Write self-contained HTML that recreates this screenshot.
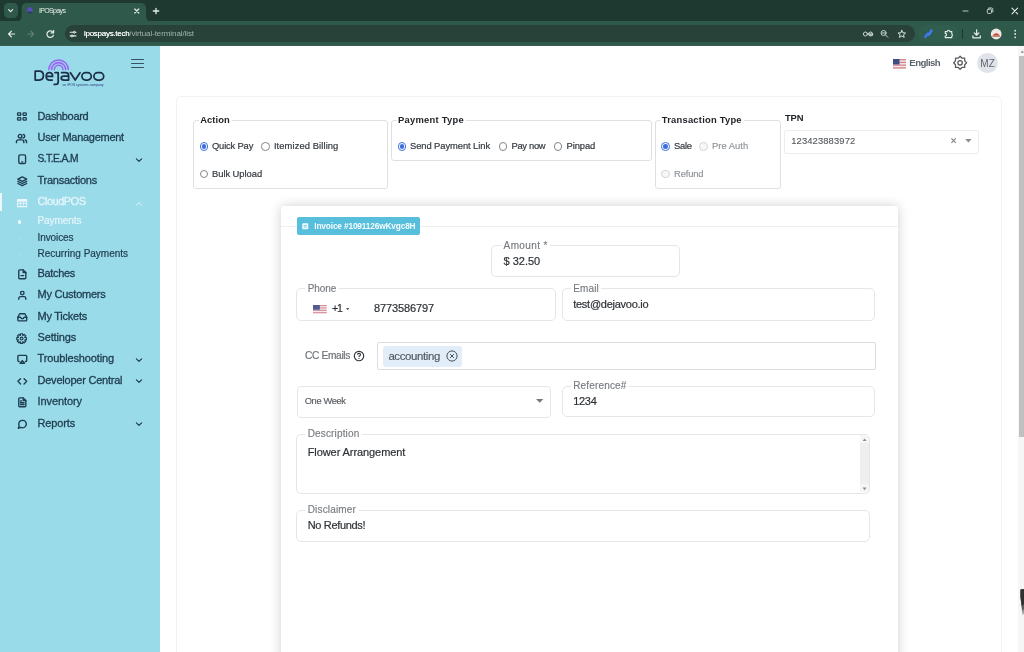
<!DOCTYPE html>
<html lang="en">
<head>
<meta charset="utf-8">
<title>IPOSpays</title>
<style>
*{box-sizing:border-box;margin:0;padding:0}
html,body{width:1024px;height:652px;overflow:hidden;background:#fff}
body{font-family:"Liberation Sans",sans-serif;position:relative;color:#333}
svg{position:absolute;overflow:visible}
.t{position:absolute;white-space:nowrap;line-height:1}
.b{position:absolute}
#root{position:absolute;left:0;top:0;width:1024px;height:652px;overflow:hidden;will-change:transform}

/* ---------- browser chrome ---------- */
#tabstrip{position:absolute;left:0;top:0;width:1024px;height:21px;background:#1e392f}
#toolbar{position:absolute;left:0;top:21px;width:1024px;height:25px;background:#2f5a4b;border-bottom:1px solid #3a5c52}
#tab{display:none}
#tabsearch{position:absolute;left:3.5px;top:3.2px;width:14.8px;height:15px;border-radius:4.5px;background:#2f5a4b}
#omni{position:absolute;left:65px;top:24.8px;width:850px;height:17.7px;border-radius:9px;background:#28423a}
#extpill{position:absolute;left:918px;top:25px;width:40px;height:17px;border-radius:9px;background:#315d4e}

/* ---------- sidebar ---------- */
#side{position:absolute;left:0;top:46px;width:160px;height:606px;background:#9adbea}
.ico{stroke:#1e3c4e;fill:none;stroke-width:1.15;stroke-linecap:round;stroke-linejoin:round}

/* ---------- main ---------- */
#card{position:absolute;left:176px;top:96px;width:826px;height:600px;border:1px solid #f2f2f2;border-radius:5px;background:#fff}
.fs{position:absolute;border:1px solid #e0e0e0;border-radius:3px}
.lgbg{position:absolute;background:#fff;height:4px}
.rd{position:absolute;width:8.6px;height:8.6px;border:1px solid #858585;border-radius:50%;background:#fff}
.rd.on{border-color:#3b6fe0}
.rd.on:after{content:"";position:absolute;left:1px;top:1px;width:4.6px;height:4.6px;border-radius:50%;background:#3b6fe0}
.rd.dis{border-color:#d4d4d4;background:#f7f7f7}
#inv{position:absolute;left:281px;top:206px;width:617px;height:500px;background:#fff;box-shadow:0 0 12px rgba(0,0,0,.19);border-radius:3px}
.fld{position:absolute;border:1px solid #e6e6e6;border-radius:5px;background:#fff}
</style>
</head>
<body>
<div id="root">
<div id="tabstrip"></div><div id="toolbar"></div><div id="tabsearch"></div><div id="tab"></div><div id="omni"></div><div id="extpill"></div>
<svg id="chromeicons" width="1024" height="46" viewBox="0 0 1024 46" style="left:0;top:0" fill="none" stroke="#e4ece8" stroke-width="1.1" stroke-linecap="round" stroke-linejoin="round">
  <!-- tab search chevron -->
  <path d="M8.6 9.6 L10.6 11.6 L12.6 9.6" stroke-width="1.2"/>
  <!-- tab shape -->
  <path d="M15.5 21.6 Q21.6 21.6 21.6 16 V8.5 Q21.6 3 27 3 H140.6 Q146 3 146 8.5 V16 Q146 21.6 152 21.6 Z" fill="#2f5a4b" stroke="none"/>
  <!-- favicon -->
  <path d="M27.2 10.2 A2.5 2.6 0 0 1 32.2 10.2 L32.2 11 L27.2 11 Z" fill="#5a4cb8" stroke="#5a4cb8" stroke-width="1"/>
  <path d="M28.2 12.6 H31.4" stroke="#2b3f66" stroke-width="1.6"/>
  <!-- tab close -->
  <path d="M134.8 9 L138.8 13 M138.8 9 L134.8 13" stroke-width="1.2"/>
  <!-- new tab -->
  <path d="M156 8.3 V13.7 M153.3 11 H158.7" stroke-width="1.3"/>
  <!-- back -->
  <path d="M14.6 34 H8.8 M11.4 31.2 L8.6 34 L11.4 36.8" stroke-width="1.2"/>
  <!-- forward (dim) -->
  <path d="M27.6 34 H33.4 M30.8 31.2 L33.6 34 L30.8 36.8" stroke="#5f8175" stroke-width="1.2"/>
  <!-- reload -->
  <path d="M53.2 32.6 A3.3 3.3 0 1 0 53.4 35.2" stroke-width="1.2"/>
  <path d="M53.6 30.4 V32.9 H51.1" stroke-width="1.2"/>
  <!-- site info (tune) -->
  <path d="M70.2 32.3 H73.2 M75.4 32.3 H76 M70.2 35.9 H71 M73.2 35.9 H76" stroke-width="1.1"/>
  <circle cx="74.3" cy="32.3" r="1" stroke-width="1"/>
  <circle cx="72" cy="35.9" r="1" stroke-width="1"/>
  <!-- key -->
  <circle cx="865.4" cy="34" r="2" stroke="#c9d6d0" stroke-width="1"/>
  <path d="M867.4 34 H872.2 M870.2 34 V35.6 M872.2 34 V35.6" stroke="#c9d6d0" stroke-width="1"/>
  <circle cx="870.6" cy="34" r="2" stroke="#c9d6d0" stroke-width="1"/>
  <!-- zoom -->
  <circle cx="883.6" cy="33" r="2.5" stroke="#c9d6d0" stroke-width="1"/>
  <path d="M885.5 35 L887.8 37.3 M882.4 33 H884.8" stroke="#c9d6d0" stroke-width="1"/>
  <!-- star -->
  <path d="M901.8 30.3 L902.9 32.8 L905.6 33 L903.5 34.8 L904.2 37.4 L901.8 36 L899.4 37.4 L900.1 34.8 L898 33 L900.7 32.8 Z" stroke="#d5e0db" stroke-width="1"/>
  <!-- blue extension -->
  <path d="M925.4 36.8 L927.8 33.8 L929 34.6 L931.4 30.6" stroke="#3e78f2" stroke-width="2.6"/>
  <!-- puzzle -->
  <path d="M945.2 31.6 H947.2 A1.3 1.3 0 0 1 949.8 31.6 H951.8 V34 A1.3 1.3 0 0 1 951.8 36.2 V37.6 H945.2 V36 A1.3 1.3 0 0 0 945.2 33.4 Z" stroke-width="1.1"/>
  <!-- separator -->
  <path d="M962.5 29.5 V38.5" stroke="#1d382e" stroke-width="1"/>
  <!-- download -->
  <path d="M976.6 29.8 V35 M974.3 32.9 L976.6 35.2 L978.9 32.9 M972.9 35.8 V37.8 H980.3 V35.8" stroke-width="1.25"/>
  <!-- profile avatar -->
  <circle cx="996.2" cy="34" r="5.4" fill="#eee9e4" stroke="none"/>
  <path d="M992.6 35.6 Q996.2 31 999.8 35.6 Z" fill="#c8442f" stroke="none"/>
  <path d="M992.8 36.2 H999.6" stroke="#8d3a2b" stroke-width=".8"/>
  <!-- kebab -->
  <circle cx="1015.2" cy="30.7" r=".9" fill="#e4ece8" stroke="none"/>
  <circle cx="1015.2" cy="34" r=".9" fill="#e4ece8" stroke="none"/>
  <circle cx="1015.2" cy="37.3" r=".9" fill="#e4ece8" stroke="none"/>
  <!-- window controls -->
  <path d="M963 11 H968" stroke="#b9c7c1" stroke-width="1"/>
  <rect x="987.3" y="9.2" width="4.2" height="4.2" rx="1" stroke="#c9d5d0" stroke-width="1"/>
  <path d="M988.8 8 H991.6 Q992.8 8 992.8 9.2 V12" stroke="#c9d5d0" stroke-width="1"/>
  <path d="M1012 8.2 L1017.6 13.8 M1017.6 8.2 L1012 13.8" stroke="#e4ece8" stroke-width="1.1"/>
</svg>
<div class="t" style="left:39.00px;top:7.00px;font-size:7.00px;color:#e6eeea;letter-spacing:-0.652px;line-height:7px;">IPOSpays</div>
<div class="t" style="left:84.00px;top:29.00px;font-size:8.00px;color:#f4f8f6;letter-spacing:-0.278px;line-height:9px;text-shadow:0 0 .4px #f4f8f6;">ipospays.tech</div>
<div class="t" style="left:129.30px;top:29.00px;font-size:8.00px;color:#9fb3aa;letter-spacing:-0.090px;line-height:9px;">/virtual-terminal/list</div>

<div id="side"></div>
<div class="b" style="left:0;top:193px;width:2px;height:18px;background:#e9f7fb"></div>
<svg viewBox="0 0 160 60" style="left:0;top:46px;width:160px;height:60px" fill="none" stroke-linecap="round" stroke-linejoin="round">
 <g stroke="#9b66f1" stroke-width="1.55">
  <path d="M48.9 23.6 A9.7 9.7 0 0 1 68.3 23.6"/>
  <path d="M51.6 23.6 A7 7 0 0 1 65.6 23.6"/>
  <path d="M54.3 23.6 A4.3 4.3 0 0 1 62.9 23.6"/>
 </g>
 <g stroke="#1b3046" stroke-width="1.75">
  <!-- D -->
  <path d="M35.2 25.1 V34 H39.2 Q43.4 34 43.4 29.55 Q43.4 25.1 39.2 25.1 Z"/>
  <!-- e -->
  <path d="M46.2 30.4 H52.6 Q52.6 26.7 49.4 26.7 Q46.2 26.7 46.2 30.4 Q46.2 34 49.6 34 H52.2"/>
  <!-- j -->
  <path d="M55 26.7 H58.2 V36 Q58.2 38.4 55.8 38.4 H54.2"/>
  <!-- a -->
  <path d="M61.6 26.7 H65.6 Q68.6 26.7 68.6 29.6 V34 H64 Q61.2 34 61.2 32 Q61.2 30 64 30 H68.4"/>
  <!-- v -->
  <path d="M70.4 26.7 L75.2 34 L80 26.7"/>
  <!-- o -->
  <rect x="81.9" y="26.7" width="9.4" height="7.3" rx="3.65"/>
  <rect x="93.9" y="26.7" width="9.8" height="7.3" rx="3.65"/>
 </g>
 <text x="62.4" y="39.8" font-family="Liberation Sans, sans-serif" font-size="2.6" fill="#2a3a78" stroke="none" textLength="41.2" lengthAdjust="spacingAndGlyphs">an iPOS systems company</text>
</svg>
<div class="b" style="left:131px;top:58.7px;width:12.8px;height:1.8px;border-radius:1px;background:#38535f"></div>
<div class="b" style="left:131px;top:62.6px;width:12.8px;height:1.8px;border-radius:1px;background:#38535f"></div>
<div class="b" style="left:131px;top:66.6px;width:12.8px;height:1.8px;border-radius:1px;background:#38535f"></div>
<div class="t" style="left:37.50px;top:110.00px;font-size:11.00px;color:#1e3c4e;letter-spacing:-0.335px;line-height:12px;-webkit-text-stroke:.3px;">Dashboard</div>
<div class="t" style="left:37.50px;top:131.00px;font-size:11.00px;color:#1e3c4e;letter-spacing:-0.272px;line-height:12px;-webkit-text-stroke:.3px;">User Management</div>
<div class="t" style="left:37.50px;top:153.00px;font-size:10.30px;color:#1e3c4e;letter-spacing:-0.576px;line-height:11px;-webkit-text-stroke:.3px;">S.T.E.A.M</div>
<div class="t" style="left:37.50px;top:174.00px;font-size:11.00px;color:#1e3c4e;letter-spacing:-0.264px;line-height:12px;-webkit-text-stroke:.3px;">Transactions</div>
<div class="t" style="left:37.50px;top:195.00px;font-size:11.00px;color:#e4f5fa;letter-spacing:-0.496px;line-height:12px;-webkit-text-stroke:.3px;">CloudPOS</div>
<div class="t" style="left:37.50px;top:267.00px;font-size:11.00px;color:#1e3c4e;letter-spacing:-0.321px;line-height:12px;-webkit-text-stroke:.3px;">Batches</div>
<div class="t" style="left:37.50px;top:288.00px;font-size:11.00px;color:#1e3c4e;letter-spacing:-0.242px;line-height:12px;-webkit-text-stroke:.3px;">My Customers</div>
<div class="t" style="left:37.50px;top:310.00px;font-size:11.00px;color:#1e3c4e;letter-spacing:-0.245px;line-height:12px;-webkit-text-stroke:.3px;">My Tickets</div>
<div class="t" style="left:37.50px;top:331.00px;font-size:11.00px;color:#1e3c4e;letter-spacing:-0.143px;line-height:12px;-webkit-text-stroke:.3px;">Settings</div>
<div class="t" style="left:37.50px;top:352.00px;font-size:11.00px;color:#1e3c4e;letter-spacing:-0.132px;line-height:12px;-webkit-text-stroke:.3px;">Troubleshooting</div>
<div class="t" style="left:37.50px;top:374.00px;font-size:11.00px;color:#1e3c4e;letter-spacing:-0.227px;line-height:12px;-webkit-text-stroke:.3px;">Developer Central</div>
<div class="t" style="left:37.50px;top:395.00px;font-size:11.00px;color:#1e3c4e;letter-spacing:-0.083px;line-height:12px;-webkit-text-stroke:.3px;">Inventory</div>
<div class="t" style="left:37.50px;top:417.00px;font-size:11.00px;color:#1e3c4e;letter-spacing:-0.145px;line-height:12px;-webkit-text-stroke:.3px;">Reports</div>
<div class="t" style="left:37.50px;top:215.00px;font-size:10.00px;color:#e4f5fa;letter-spacing:-0.083px;line-height:11px;-webkit-text-stroke:.2px;">Payments</div>
<div class="t" style="left:37.50px;top:232.00px;font-size:10.00px;color:#1e3c4e;letter-spacing:-0.098px;line-height:11px;-webkit-text-stroke:.2px;">Invoices</div>
<div class="t" style="left:37.50px;top:248.00px;font-size:10.00px;color:#1e3c4e;letter-spacing:0.000px;line-height:11px;-webkit-text-stroke:.2px;">Recurring Payments</div>
<div class="b" style="left:18px;top:220.4px;width:3.2px;height:3.2px;border-radius:50%;background:#eef9fc"></div>
<div class="b" style="left:18.2px;top:237.2px;width:2.8px;height:2.8px;border-radius:50%;background:#a6dcea"></div>
<div class="b" style="left:18.2px;top:253.6px;width:2.8px;height:2.8px;border-radius:50%;background:#a6dcea"></div>
<svg class="ico" viewBox="0 0 1024 652" style="left:0;top:0;width:1024px;height:652px;stroke-width:1.3"><rect x="17.55" y="112.85" width="3.2" height="2.6" rx=".7"/><rect x="23.05" y="112.85" width="3.2" height="2.6" rx=".7"/><rect x="17.55" y="117.55" width="3.2" height="2.6" rx=".7"/><rect x="23.05" y="117.55" width="3.2" height="2.6" rx=".7"/></svg>
<svg class="ico" viewBox="0 0 24 24" style="left:16.40px;top:132.80px;width:11.00px;height:11.00px;stroke:#1e3c4e;stroke-width:3.10"><path d="M17 21v-2a4 4 0 0 0-4-4H5a4 4 0 0 0-4 4v2"/><circle cx="9" cy="7" r="4"/><path d="M23 21v-2a4 4 0 0 0-3-3.87"/><path d="M16 3.13a4 4 0 0 1 0 7.75"/></svg>
<svg class="ico" viewBox="0 0 24 24" style="left:16.60px;top:154.20px;width:10.40px;height:10.40px;stroke:#1e3c4e;stroke-width:3.10"><rect x="4.2" y="2" width="15.6" height="20" rx="3"/><path d="M11 18.2h2"/></svg>
<svg class="ico" viewBox="0 0 24 24" style="left:16.60px;top:175.50px;width:10.60px;height:10.60px;stroke:#1e3c4e;stroke-width:3.10"><path d="M12 2 2 7l10 5 10-5-10-5z"/><path d="M2 17l10 5 10-5"/><path d="M2 12l10 5 10-5"/></svg>
<svg viewBox="0 0 24 24" style="left:15.6px;top:196.5px;width:12.2px;height:12.2px"><path fill="#e9f7fb" d="M3 4h18a1 1 0 0 1 1 1v14a1 1 0 0 1-1 1H3a1 1 0 0 1-1-1V5a1 1 0 0 1 1-1zm1 5.5v3h4.5v-3zm6 0v3h4.5v-3zm6 0v3H20v-3zM4 14v3.5h4.5V14zm6 0v3.5h4.5V14zm6 0v3.5H20V14z"/></svg>
<svg class="ico" viewBox="0 0 24 24" style="left:16.60px;top:268.80px;width:10.60px;height:10.60px;stroke:#1e3c4e;stroke-width:3.10"><path d="M14 2H6a2 2 0 0 0-2 2v16a2 2 0 0 0 2 2h12a2 2 0 0 0 2-2V8z"/><path d="M14 2v6h6"/><path d="M9 15h6"/></svg>
<svg class="ico" viewBox="0 0 24 24" style="left:16.60px;top:290.10px;width:10.60px;height:10.60px;stroke:#1e3c4e;stroke-width:3.10"><path d="M20 21v-2a4 4 0 0 0-4-4H8a4 4 0 0 0-4 4v2"/><circle cx="12" cy="7" r="4"/></svg>
<svg class="ico" viewBox="0 0 24 24" style="left:16.60px;top:311.60px;width:10.60px;height:10.60px;stroke:#1e3c4e;stroke-width:3.10"><path d="M22 12h-6l-2 3h-4l-2-3H2"/><path d="M5.45 5.11 2 12v6a2 2 0 0 0 2 2h16a2 2 0 0 0 2-2v-6l-3.45-6.89A2 2 0 0 0 16.76 4H7.24a2 2 0 0 0-1.79 1.11z"/></svg>
<svg class="ico" viewBox="0 0 24 24" style="left:16.30px;top:332.50px;width:11.20px;height:11.20px;stroke:#1e3c4e;stroke-width:2.50"><path d="M9.49 5.04 L9.64 1.67 L14.36 1.67 L14.51 5.04 L15.15 5.30 L17.64 3.02 L20.98 6.36 L18.70 8.85 L18.96 9.49 L22.33 9.64 L22.33 14.36 L18.96 14.51 L18.70 15.15 L20.98 17.64 L17.64 20.98 L15.15 18.70 L14.51 18.96 L14.36 22.33 L9.64 22.33 L9.49 18.96 L8.85 18.70 L6.36 20.98 L3.02 17.64 L5.30 15.15 L5.04 14.51 L1.67 14.36 L1.67 9.64 L5.04 9.49 L5.30 8.85 L3.02 6.36 L6.36 3.02 L8.85 5.30 Z"/><circle cx="12" cy="12" r="3"/></svg>
<svg class="ico" viewBox="0 0 24 24" style="left:16.60px;top:353.90px;width:10.60px;height:10.60px;stroke:#1e3c4e;stroke-width:3.10"><path d="M5 17H4a2 2 0 0 1-2-2V5a2 2 0 0 1 2-2h16a2 2 0 0 1 2 2v10a2 2 0 0 1-2 2h-1"/><path d="M12 15l5 6H7l5-6z"/></svg>
<svg class="ico" viewBox="0 0 24 24" style="left:16.60px;top:375.80px;width:10.60px;height:10.60px;stroke:#1e3c4e;stroke-width:3.10"><path d="M16 18l6-6-6-6"/><path d="M8 6l-6 6 6 6"/></svg>
<svg class="ico" viewBox="0 0 24 24" style="left:16.60px;top:397.20px;width:10.60px;height:10.60px;stroke:#1e3c4e;stroke-width:3.10"><path d="M14 2H6a2 2 0 0 0-2 2v16a2 2 0 0 0 2 2h12a2 2 0 0 0 2-2V8z"/><path d="M14 2v6h6"/><path d="M16 13H8"/><path d="M16 17H8"/><path d="M10 9H8"/></svg>
<svg class="ico" viewBox="0 0 24 24" style="left:16.60px;top:418.70px;width:10.60px;height:10.60px;stroke:#1e3c4e;stroke-width:3.10"><path d="M21 11.5a8.38 8.38 0 0 1-.9 3.8 8.5 8.5 0 0 1-7.6 4.7 8.38 8.38 0 0 1-3.8-.9L3 21l1.9-5.7a8.38 8.38 0 0 1-.9-3.8 8.5 8.5 0 0 1 4.7-7.6 8.38 8.38 0 0 1 3.8-.9h.5a8.48 8.48 0 0 1 8 8v.5z"/></svg>
<svg viewBox="-6 -6 12 12" style="left:132.60px;top:153.90px;width:12px;height:12px;fill:none;stroke:#1e3c4e;stroke-width:1.2;stroke-linecap:round;stroke-linejoin:round"><path d="M-2.6 -1.2 L0 1.4 L2.6 -1.2"/></svg>
<svg viewBox="-6 -6 12 12" style="left:132.60px;top:197.80px;width:12px;height:12px;fill:none;stroke:#c8ecf5;stroke-width:1.2;stroke-linecap:round;stroke-linejoin:round"><path d="M-2.6 1.2 L0 -1.4 L2.6 1.2"/></svg>
<svg viewBox="-6 -6 12 12" style="left:132.60px;top:353.70px;width:12px;height:12px;fill:none;stroke:#1e3c4e;stroke-width:1.2;stroke-linecap:round;stroke-linejoin:round"><path d="M-2.6 -1.2 L0 1.4 L2.6 -1.2"/></svg>
<svg viewBox="-6 -6 12 12" style="left:132.60px;top:375.00px;width:12px;height:12px;fill:none;stroke:#1e3c4e;stroke-width:1.2;stroke-linecap:round;stroke-linejoin:round"><path d="M-2.6 -1.2 L0 1.4 L2.6 -1.2"/></svg>
<svg viewBox="-6 -6 12 12" style="left:132.60px;top:417.60px;width:12px;height:12px;fill:none;stroke:#1e3c4e;stroke-width:1.2;stroke-linecap:round;stroke-linejoin:round"><path d="M-2.6 -1.2 L0 1.4 L2.6 -1.2"/></svg>

<div id="card"></div>
<svg viewBox="0 0 13 9.6" style="left:893.40px;top:58.90px;width:13.00px;height:9.60px;opacity:1"><rect width="13" height="9.6" fill="#f3eded"/><rect y="0.000" width="13" height="1.371" fill="#d4858e"/><rect y="2.743" width="13" height="1.371" fill="#d4858e"/><rect y="5.486" width="13" height="1.371" fill="#d4858e"/><rect y="8.229" width="13" height="1.371" fill="#d4858e"/><rect width="6.500" height="5.486" fill="#3f4c84"/></svg>
<div class="t" style="left:909.30px;top:57.00px;font-size:9.60px;color:#5d636b;font-weight:bold;letter-spacing:-0.538px;line-height:11px;">English</div>
<svg viewBox="0 0 1024 652" style="left:0;top:0;width:1024px;height:652px" fill="none" stroke="#585c60" stroke-width="1.3" stroke-linejoin="round"><path d="M960.10 56.30 L962.01 58.18 L964.70 58.20 L964.72 60.89 L966.60 62.80 L964.72 64.71 L964.70 67.40 L962.01 67.42 L960.10 69.30 L958.19 67.42 L955.50 67.40 L955.48 64.71 L953.60 62.80 L955.48 60.89 L955.50 58.20 L958.19 58.18 Z"/><circle cx="960.1" cy="62.8" r="2.2"/></svg>
<div class="b" style="left:977px;top:52.6px;width:20.6px;height:20.6px;border-radius:50%;background:#e0e3ea"></div>
<div class="t" style="left:980.30px;top:58.00px;font-size:10.00px;color:#60666e;letter-spacing:0.081px;line-height:11px;">MZ</div>
<div class="fs" style="left:193px;top:120px;width:195px;height:69px"></div>
<div class="lgbg" style="left:198.8px;top:119px;width:33.0px"></div>
<div class="t" style="left:200.30px;top:114.00px;font-size:9.40px;color:#212529;font-weight:bold;letter-spacing:0.043px;line-height:11px;">Action</div>
<div class="rd on" style="left:199.70px;top:142.00px"></div>
<div class="t" style="left:212.00px;top:140.00px;font-size:9.40px;color:#353a40;letter-spacing:-0.171px;line-height:11px;-webkit-text-stroke:.2px;">Quick Pay</div>
<div class="rd " style="left:261.30px;top:142.00px"></div>
<div class="t" style="left:273.90px;top:140.00px;font-size:9.40px;color:#353a40;letter-spacing:0.093px;line-height:11px;-webkit-text-stroke:.2px;">Itemized Billing</div>
<div class="rd " style="left:199.70px;top:169.80px"></div>
<div class="t" style="left:212.00px;top:168.00px;font-size:9.40px;color:#353a40;letter-spacing:-0.044px;line-height:11px;-webkit-text-stroke:.2px;">Bulk Upload</div>
<div class="fs" style="left:391px;top:120px;width:261px;height:41px"></div>
<div class="lgbg" style="left:396.5px;top:119px;width:69.7px"></div>
<div class="t" style="left:398.00px;top:114.00px;font-size:9.40px;color:#212529;font-weight:bold;letter-spacing:0.264px;line-height:11px;">Payment Type</div>
<div class="rd on" style="left:397.60px;top:142.00px"></div>
<div class="t" style="left:410.00px;top:140.00px;font-size:9.40px;color:#353a40;letter-spacing:-0.077px;line-height:11px;-webkit-text-stroke:.2px;">Send Payment Link</div>
<div class="rd " style="left:498.50px;top:142.00px"></div>
<div class="t" style="left:511.50px;top:140.00px;font-size:9.40px;color:#353a40;letter-spacing:-0.308px;line-height:11px;-webkit-text-stroke:.2px;">Pay now</div>
<div class="rd " style="left:553.70px;top:142.00px"></div>
<div class="t" style="left:566.50px;top:140.00px;font-size:9.40px;color:#353a40;letter-spacing:-0.095px;line-height:11px;-webkit-text-stroke:.2px;">Pinpad</div>
<div class="fs" style="left:655px;top:120px;width:126px;height:69px"></div>
<div class="lgbg" style="left:660.3px;top:119px;width:83.7px"></div>
<div class="t" style="left:661.80px;top:114.00px;font-size:9.40px;color:#212529;font-weight:bold;letter-spacing:0.224px;line-height:11px;">Transaction Type</div>
<div class="rd on" style="left:661.40px;top:142.00px"></div>
<div class="t" style="left:674.10px;top:140.00px;font-size:9.40px;color:#353a40;letter-spacing:-0.303px;line-height:11px;-webkit-text-stroke:.2px;">Sale</div>
<div class="rd dis" style="left:699.30px;top:142.00px"></div>
<div class="t" style="left:712.10px;top:140.00px;font-size:9.40px;color:#8e9398;letter-spacing:0.018px;line-height:11px;-webkit-text-stroke:.15px;">Pre Auth</div>
<div class="rd dis" style="left:661.40px;top:169.80px"></div>
<div class="t" style="left:674.10px;top:168.00px;font-size:9.40px;color:#8e9398;letter-spacing:-0.185px;line-height:11px;-webkit-text-stroke:.15px;">Refund</div>
<div class="t" style="left:784.90px;top:112.00px;font-size:9.40px;color:#212529;font-weight:bold;letter-spacing:-0.067px;line-height:11px;">TPN</div>
<div class="b" style="left:784px;top:130px;width:195px;height:24px;border:1px solid #ededed;border-radius:2px;background:#fff"></div>
<div class="t" style="left:791.20px;top:135.00px;font-size:9.40px;color:#55595e;letter-spacing:0.130px;line-height:11px;-webkit-text-stroke:.12px;">123423883972</div>
<svg viewBox="0 0 1024 652" style="left:0;top:0;width:1024px;height:652px" fill="none"><path d="M951.4 138.4 L955.8 142.8 M955.8 138.4 L951.4 142.8" stroke="#858585" stroke-width="1.15"/><path d="M965.2 138.9 H971.6 L968.4 142.4 Z" fill="#8a8a8a"/></svg>
<div id="inv"></div>
<div class="b" style="left:281px;top:226.2px;width:617px;height:1px;background:#efefef"></div>
<div class="b" style="left:296.9px;top:216.8px;width:123px;height:17.9px;border-radius:2px;background:#57bfdb"></div>
<svg viewBox="0 0 8 8" style="left:301.9px;top:222.5px;width:6.5px;height:6.5px"><rect x=".3" y=".3" width="7.4" height="7.4" rx="1" fill="#f2fbfd"/><path d="M2 3h4M2 5h4" stroke="#57bfdb" stroke-width=".9"/></svg>
<div class="t" style="left:314.30px;top:221.00px;font-size:8.30px;color:#f6fcfe;font-weight:bold;letter-spacing:-0.154px;line-height:10px;">Invoice #1091126wKvgc8H</div>
<div class="fld" style="left:491px;top:245px;width:189px;height:32px;border-radius:5px"></div>
<div class="lgbg" style="left:501.1px;top:244px;width:49.1px"></div>
<div class="t" style="left:503.60px;top:240.00px;font-size:10.00px;color:#777b80;letter-spacing:0.371px;line-height:11px;-webkit-text-stroke:.15px;">Amount *</div>
<div class="t" style="left:503.60px;top:255.00px;font-size:11.00px;color:#2e3236;letter-spacing:-0.014px;line-height:12px;-webkit-text-stroke:.2px;">$ 32.50</div>
<div class="fld" style="left:296px;top:288px;width:260px;height:33px;border-radius:5px"></div>
<div class="lgbg" style="left:305.2px;top:287px;width:33.4px"></div>
<div class="t" style="left:307.70px;top:283.00px;font-size:10.00px;color:#777b80;letter-spacing:-0.103px;line-height:11px;-webkit-text-stroke:.15px;">Phone</div>
<svg viewBox="0 0 13.7 8.3" style="left:313.40px;top:304.50px;width:13.70px;height:8.30px;opacity:0.9"><rect width="13.7" height="8.3" fill="#f3eded"/><rect y="0.000" width="13.7" height="1.186" fill="#d4858e"/><rect y="2.371" width="13.7" height="1.186" fill="#d4858e"/><rect y="4.743" width="13.7" height="1.186" fill="#d4858e"/><rect y="7.114" width="13.7" height="1.186" fill="#d4858e"/><rect width="6.850" height="4.743" fill="#3f4c84"/></svg>
<div class="t" style="left:332.00px;top:302.00px;font-size:10.60px;color:#2e3236;letter-spacing:-1.243px;line-height:12px;-webkit-text-stroke:.2px;">+1</div>
<svg viewBox="0 0 6 4" style="left:345.6px;top:308.2px;width:3.4px;height:2.2px"><path d="M0 0H6L3 4Z" fill="#555"/></svg>
<div class="t" style="left:373.90px;top:302.00px;font-size:11.00px;color:#2e3236;letter-spacing:-0.108px;line-height:12px;-webkit-text-stroke:.2px;">8773586797</div>
<div class="fld" style="left:562px;top:288px;width:313px;height:33px;border-radius:5px"></div>
<div class="lgbg" style="left:570.7px;top:287px;width:30.7px"></div>
<div class="t" style="left:573.20px;top:283.00px;font-size:10.00px;color:#777b80;letter-spacing:0.139px;line-height:11px;-webkit-text-stroke:.15px;">Email</div>
<div class="t" style="left:573.20px;top:298.00px;font-size:11.00px;color:#2e3236;letter-spacing:-0.256px;line-height:12px;-webkit-text-stroke:.2px;">test@dejavoo.io</div>
<div class="t" style="left:305.00px;top:350.00px;font-size:10.20px;color:#6d7379;letter-spacing:-0.341px;line-height:11px;-webkit-text-stroke:.2px;">CC Emails</div>
<svg viewBox="0 0 12 12" style="left:353.1px;top:349.7px;width:12px;height:12px" fill="none" stroke="#33373b" stroke-width="1.15"><circle cx="6" cy="6" r="4.7"/><path d="M4.5 4.8 Q4.5 3.4 6 3.4 Q7.5 3.4 7.5 4.7 Q7.5 5.6 6 6.3 V6.9" stroke-width="1.1"/><circle cx="6" cy="8.4" r=".55" fill="#3a3e42" stroke="none"/></svg>
<div class="b" style="left:377px;top:342px;width:499px;height:28px;border:1px solid #dedede;border-radius:2px;background:#fff"></div>
<div class="b" style="left:382.9px;top:345.6px;width:79.3px;height:21.3px;border-radius:3px;background:#e2edfa"></div>
<div class="t" style="left:388.40px;top:350.00px;font-size:11.40px;color:#50565d;letter-spacing:-0.354px;line-height:12px;-webkit-text-stroke:.15px;">accounting</div>
<svg viewBox="0 0 12 12" style="left:445.5px;top:350px;width:12px;height:12px" fill="none" stroke="#4a4f55" stroke-width="1"><circle cx="6" cy="6" r="5.1"/><path d="M4.1 4.1 L7.9 7.9 M7.9 4.1 L4.1 7.9"/></svg>
<div class="fld" style="left:297px;top:386px;width:254px;height:32px;border-radius:4px"></div>
<div class="t" style="left:304.70px;top:396.00px;font-size:9.30px;color:#595d62;letter-spacing:-0.346px;line-height:10px;-webkit-text-stroke:.15px;">One Week</div>
<svg viewBox="0 0 8 4" style="left:536.2px;top:398.8px;width:7.4px;height:3.7px"><path d="M0 0H8L4 4Z" fill="#777"/></svg>
<div class="fld" style="left:562px;top:386px;width:313px;height:31px;border-radius:5px"></div>
<div class="lgbg" style="left:570.7px;top:385px;width:58.4px"></div>
<div class="t" style="left:573.20px;top:380.00px;font-size:10.00px;color:#777b80;letter-spacing:0.170px;line-height:11px;-webkit-text-stroke:.15px;">Reference#</div>
<div class="t" style="left:573.20px;top:395.00px;font-size:11.00px;color:#2e3236;letter-spacing:-0.293px;line-height:12px;-webkit-text-stroke:.2px;">1234</div>
<div class="fld" style="left:296px;top:434px;width:574px;height:60px;border-radius:5px"></div>
<div class="lgbg" style="left:305.2px;top:433px;width:56.7px"></div>
<div class="t" style="left:307.70px;top:428.00px;font-size:10.00px;color:#777b80;letter-spacing:0.153px;line-height:11px;-webkit-text-stroke:.15px;">Description</div>
<div class="t" style="left:307.70px;top:446.00px;font-size:11.00px;color:#2e3236;letter-spacing:-0.080px;line-height:12px;-webkit-text-stroke:.2px;">Flower Arrangement</div>
<div class="b" style="left:860.4px;top:435.2px;width:8.4px;height:57.1px;background:#efefef;border-radius:0 4px 4px 0"></div>
<div class="b" style="left:860.4px;top:435.2px;width:8.4px;height:8px;background:#f6f6f6;border-radius:0 4px 0 0"></div><div class="b" style="left:860.4px;top:484.3px;width:8.4px;height:8px;background:#f6f6f6;border-radius:0 0 4px 0"></div>
<svg viewBox="0 0 1024 652" style="left:0;top:0;width:1024px;height:652px"><path d="M862.6 441 H866.6 L864.6 438.4 Z M862.6 487.6 H866.6 L864.6 490.2 Z" fill="#8c8c8c"/></svg>
<div class="fld" style="left:296px;top:510px;width:574px;height:32px;border-radius:5px"></div>
<div class="lgbg" style="left:305.2px;top:509px;width:53.4px"></div>
<div class="t" style="left:307.70px;top:504.00px;font-size:10.00px;color:#777b80;letter-spacing:0.173px;line-height:11px;-webkit-text-stroke:.15px;">Disclaimer</div>
<div class="t" style="left:307.70px;top:519.00px;font-size:11.00px;color:#2e3236;letter-spacing:-0.340px;line-height:12px;-webkit-text-stroke:.2px;">No Refunds!</div>
<div class="b" style="left:1018px;top:46px;width:6px;height:606px;background:#f6f6f6"></div>
<div class="b" style="left:1019.3px;top:56px;width:4.7px;height:381px;background:#c0c0c0"></div>
<svg viewBox="0 0 1024 652" style="left:0;top:0;width:1024px;height:652px"><path d="M1020.6 52.8 H1024 L1022.4 50.6 Z" fill="#8a8a8a"/><path d="M1020.5 589.6 L1024 589 V613 L1022.7 615.4 Q1021.2 606 1020.5 597 Z" fill="#9a9a9a"/><path d="M1020.5 589.6 L1024 589 V609 L1022.3 611 Q1021.2 604 1020.5 597 Z" fill="#5e5e5e"/><path d="M1020.5 589.6 L1024 589 V604 L1021.8 606 Q1021 601 1020.5 597 Z" fill="#303030"/></svg>

</div>
</body>
</html>
